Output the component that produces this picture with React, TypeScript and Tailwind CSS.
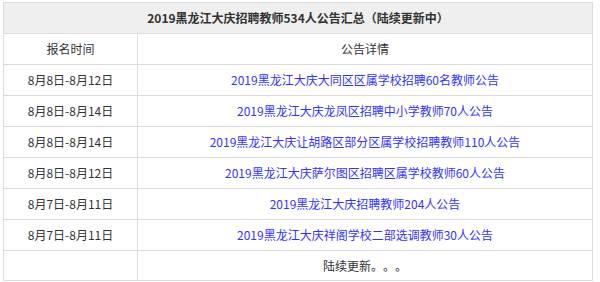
import React from "react";

const rows: [string, string][] = [
  ["8月8日-8月12日", "2019黑龙江大庆大同区区属学校招聘60名教师公告"],
  ["8月8日-8月14日", "2019黑龙江大庆龙凤区招聘中小学教师70人公告"],
  ["8月8日-8月14日", "2019黑龙江大庆让胡路区部分区属学校招聘教师110人公告"],
  ["8月8日-8月12日", "2019黑龙江大庆萨尔图区招聘区属学校教师60人公告"],
  ["8月7日-8月11日", "2019黑龙江大庆招聘教师204人公告"],
  ["8月7日-8月11日", "2019黑龙江大庆祥阁学校二部选调教师30人公告"],
];

export default function App() {
  const font = { fontFamily: '"Noto Sans CJK SC", "Noto Sans", sans-serif' };
  return (
    <div className="w-[600px] h-[282px] bg-white pt-[2px] pl-[3px] [text-spacing-trim:space-all]" style={font}>
      <table className="border-collapse w-[590px] text-[12px] text-[#333] table-fixed">
        <colgroup>
          <col className="w-[134px]" />
          <col />
        </colgroup>
        <tbody>
          <tr className="h-[31px] bg-[#efefef]">
            <td colSpan={2} className="border border-[#dcdcdc] text-center font-bold text-[12px] leading-none">
              2019黑龙江大庆招聘教师534人公告汇总（陆续更新中）
            </td>
          </tr>
          <tr className="h-[31px]">
            <td className="border border-[#dcdcdc] text-center leading-none">报名时间</td>
            <td className="border border-[#dcdcdc] text-center leading-none">公告详情</td>
          </tr>
          {rows.map(([d, t], i) => (
            <tr key={i} className="h-[31px]">
              <td className="border border-[#dcdcdc] text-center leading-none">{d}</td>
              <td className="border border-[#dcdcdc] text-center leading-none text-[#3333ff]">{t}</td>
            </tr>
          ))}
          <tr className="h-[30px]">
            <td className="border border-[#dcdcdc]"></td>
            <td className="border border-[#dcdcdc] text-center leading-none">陆续更新。。。</td>
          </tr>
        </tbody>
      </table>
    </div>
  );
}
